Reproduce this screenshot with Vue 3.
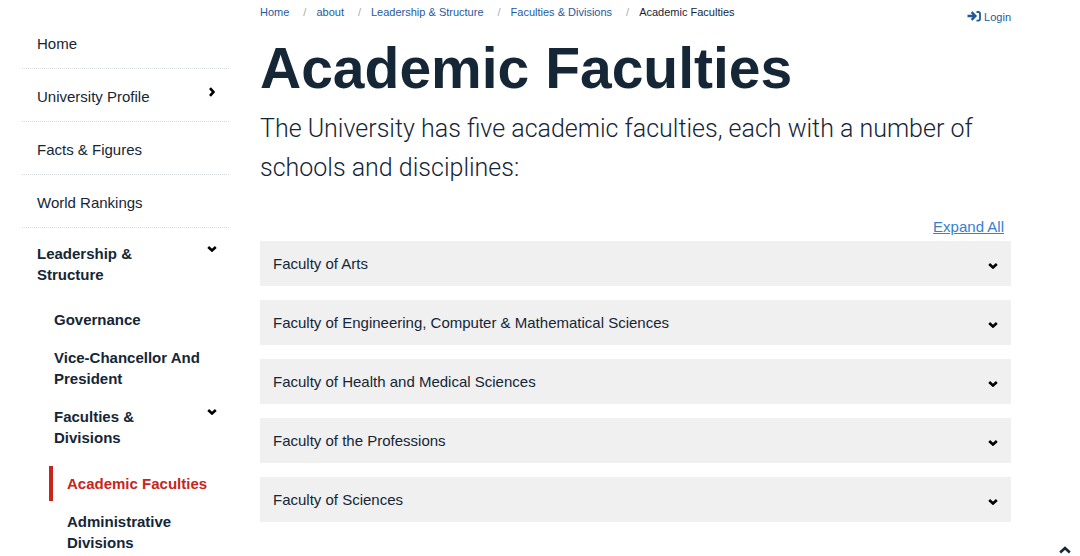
<script setup>
import { ref } from 'vue'

const crumbs = ['Home', 'about', 'Leadership & Structure', 'Faculties & Divisions']
const topItems = [
  { label: 'Home' },
  { label: 'University Profile', arrow: true },
  { label: 'Facts & Figures' },
  { label: 'World Rankings' },
]
const faculties = ref([
  'Faculty of Arts',
  'Faculty of Engineering, Computer & Mathematical Sciences',
  'Faculty of Health and Medical Sciences',
  'Faculty of the Professions',
  'Faculty of Sciences',
])
</script>

<template>
  <div class="page">
    <nav class="side" aria-label="Section">
      <ul class="top">
        <li v-for="item in topItems" :key="item.label" class="ruled">
          <a href="#">{{ item.label }}</a>
          <button v-if="item.arrow" type="button" class="toggle" aria-label="Show submenu">
            <svg class="chev right" viewBox="0 0 10 6" aria-hidden="true"><path d="M1.2 1L5 4.5L8.8 1" /></svg>
          </button>
        </li>
        <li class="open">
          <a href="#">Leadership &amp; Structure</a>
          <button type="button" class="toggle" aria-label="Hide submenu">
            <svg class="chev" viewBox="0 0 10 6" aria-hidden="true"><path d="M1.2 1L5 4.5L8.8 1" /></svg>
          </button>
        </li>
      </ul>
      <ul class="sub">
        <li><a href="#">Governance</a></li>
        <li><a href="#">Vice-Chancellor And President</a></li>
        <li class="branch">
          <a href="#">Faculties &amp; Divisions</a>
          <button type="button" class="toggle" aria-label="Hide submenu">
            <svg class="chev" viewBox="0 0 10 6" aria-hidden="true"><path d="M1.2 1L5 4.5L8.8 1" /></svg>
          </button>
        </li>
      </ul>
      <ul class="leaf">
        <li class="current"><a href="#" aria-current="page">Academic Faculties</a></li>
        <li><a href="#">Administrative Divisions</a></li>
      </ul>
    </nav>

    <main class="main">
      <header class="bar">
        <nav aria-label="Breadcrumb">
          <ol class="crumbs">
            <li v-for="c in crumbs" :key="c"><a href="#">{{ c }}</a></li>
            <li>Academic Faculties</li>
          </ol>
        </nav>
        <a href="#" class="login">
          <svg viewBox="0 0 14 12" aria-hidden="true">
            <path d="M0.5 5H8M4.6 1.2L8.4 5L4.6 8.8" stroke-width="2.4" />
            <path d="M9.5 1H11.2Q13 1 13 2.8V7.8Q13 9.6 11.2 9.6H9.5" stroke-width="1.8" />
          </svg>
          <span>Login</span>
        </a>
      </header>
      <h1>Academic Faculties</h1>
      <p class="lead">The University has five academic faculties, each with a number of schools and disciplines:</p>
      <div class="expand"><a href="#">Expand All</a></div>
      <div class="accordion">
        <button v-for="f in faculties" :key="f" type="button" class="panel" aria-expanded="false">
          <span>{{ f }}</span>
          <svg class="chev" viewBox="0 0 10 6" aria-hidden="true"><path d="M1.2 1L5 4.5L8.8 1" /></svg>
        </button>
      </div>
    </main>

    <button type="button" class="to-top" aria-label="Back to top">
      <svg viewBox="0 0 12 8" aria-hidden="true"><path d="M1.2 6.5L6 2L10.8 6.5" /></svg>
    </button>
  </div>
</template>

<style>
body {
  margin: 0;
  background: #fff;
}
</style>

<style scoped>
.page {
  display: grid;
  grid-template-columns: 207px minmax(0, 1fr);
  column-gap: 31px;
  padding: 0 69px 0 22px;
  font-family: "Liberation Sans", Arial, sans-serif;
  font-size: 15px;
  line-height: 21px;
  color: #152636;
}
ul,
ol {
  list-style: none;
  margin: 0;
  padding: 0;
}
a {
  color: inherit;
  text-decoration: none;
}
button {
  font: inherit;
  color: inherit;
  border: 0;
  padding: 0;
  background: none;
  cursor: pointer;
}
.side {
  padding-top: 16px;
}
.side li {
  display: flex;
  justify-content: space-between;
  align-items: flex-start;
}
.ruled {
  padding: 17px 12px 14px 15px;
  border-bottom: 1px dotted #d4d7da;
}
.open {
  padding: 15px 12px 17px 15px;
  font-weight: 700;
}
.open a,
.branch a {
  max-width: 110px;
}
.toggle {
  display: flex;
  align-items: center;
  justify-content: center;
  width: 10px;
  height: 12px;
}
.chev {
  width: 10px;
  height: 6px;
  fill: none;
  stroke: #000;
  stroke-width: 2.6;
}
.right {
  transform: rotate(-90deg);
}
.sub,
.leaf {
  font-weight: 700;
}
.sub li {
  padding: 7px 12px 10px 32px;
}
.leaf {
  padding-top: 8px;
}
.leaf li {
  padding: 7px 13px 7px 45px;
}
.leaf .current {
  margin: 0 0 3px 27px;
  padding: 7px 0 7px 14px;
  border-left: 4px solid #c8251d;
  color: #c8251d;
}
.bar {
  display: flex;
  justify-content: space-between;
  align-items: flex-start;
  font-size: 11px;
  line-height: 14px;
}
.crumbs {
  display: flex;
  padding-top: 5px;
}
.crumbs li + li::before {
  content: "/";
  padding: 0 10px 0 14px;
  color: #aaa;
}
.crumbs a,
.login {
  color: #1f5a9c;
}
.login {
  display: flex;
  align-items: center;
  gap: 3px;
  padding-top: 10px;
}
.login svg {
  width: 14px;
  height: 12px;
  fill: none;
  stroke: currentColor;
}
h1 {
  margin: 12px 0 0;
  font-size: 57px;
  line-height: 64px;
}
.lead {
  margin: 9px 0 0;
  font-family: Roboto, "Liberation Sans", sans-serif;
  font-weight: 300;
  font-size: 25px;
  line-height: 39px;
}
.expand {
  padding: 29px 7px 4px;
  text-align: right;
}
.expand a {
  color: #3580d2;
  text-decoration: underline;
}
.accordion {
  display: grid;
  gap: 14px;
}
.panel {
  display: flex;
  justify-content: space-between;
  align-items: center;
  padding: 12px 13px;
  background: #f0f0f0;
  text-align: left;
}
.panel .chev {
  margin-top: 4px;
}
.to-top {
  position: fixed;
  right: 9px;
  bottom: 2px;
  display: flex;
}
.to-top svg {
  width: 12px;
  height: 8px;
  fill: none;
  stroke: #152636;
  stroke-width: 2.6;
}
</style>
